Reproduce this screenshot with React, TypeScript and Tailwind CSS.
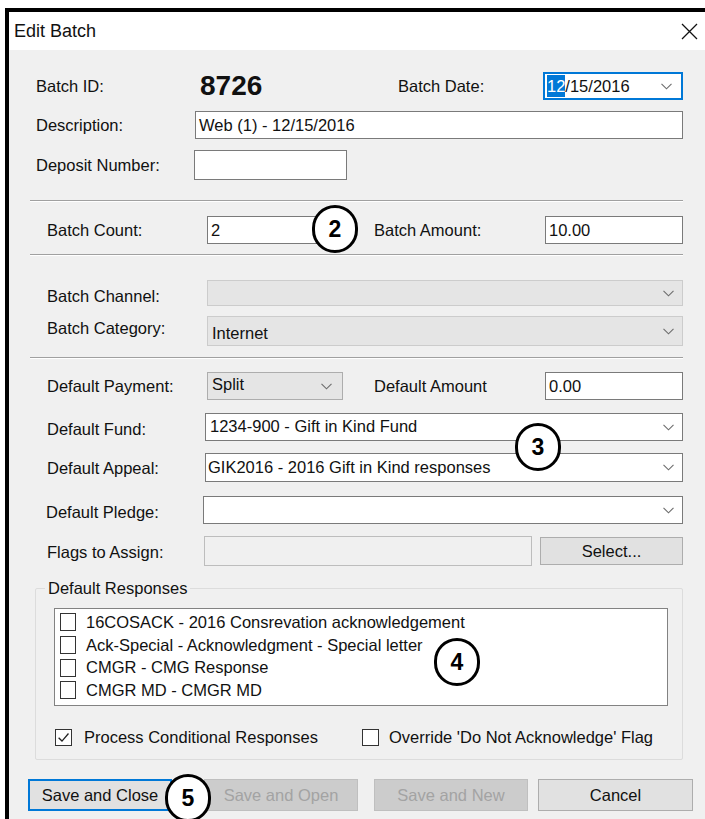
import React from 'react';

const font = "font-['Liberation_Sans',Arial,sans-serif]";

const Chevron: React.FC = () => (
  <svg width="11" height="7" viewBox="0 0 11 7" className="shrink-0">
    <path d="M0.5 0.8 L5.5 5.8 L10.5 0.8" fill="none" stroke="#6d6d6d" strokeWidth="1.1" />
  </svg>
);

const CheckBox: React.FC<{ checked?: boolean; className?: string }> = ({ checked, className }) => (
  <span className={`shrink-0 bg-white border border-[#333] flex items-center justify-center ${className ?? ''}`}>
    {checked && (
      <svg width="13" height="13" viewBox="0 0 12 12">
        <path d="M1.5 6.2 L4.6 9.3 L10.6 2.3" fill="none" stroke="#222" strokeWidth="1.2" />
      </svg>
    )}
  </span>
);

const Badge: React.FC<{ n: string; className: string }> = ({ n, className }) => (
  <div
    className={`absolute w-[46px] h-[48px] rounded-full border-[3px] border-black bg-white flex items-center justify-center text-[23px] font-bold text-black ${className}`}
  >
    {n}
  </div>
);

const Separator: React.FC<{ className: string }> = ({ className }) => (
  <div className={`ml-[21px] w-[653px] h-[2px] border-t border-[#a0a0a0] border-b border-b-white ${className}`} />
);

const responses = [
  '16COSACK - 2016 Consrevation acknowledgement',
  'Ack-Special - Acknowledgment - Special letter',
  'CMGR - CMG Response',
  'CMGR MD - CMGR MD',
];

export default function App() {
  return (
    <div className={`w-[705px] h-[819px] bg-white relative overflow-hidden text-[16.5px] text-[#111] ${font}`}>
      <div className="ml-[5px] mt-[8px] h-[811px] border-l-4 border-t-4 border-black flex flex-col">
        {/* title bar */}
        <div className="h-[38px] bg-white flex items-center justify-between pl-[5px] pr-[7px] shrink-0">
          <span className="text-[18px] leading-none">Edit Batch</span>
          <svg width="17" height="17" viewBox="0 0 17 17">
            <path d="M1 1 L16 16 M16 1 L1 16" stroke="#111" strokeWidth="1.3" />
          </svg>
        </div>

        <div className="flex-1 bg-[#f0f0f0] flex flex-col">
          {/* batch id / date */}
          <div className="mt-[22px] h-[28px] pl-[27px] flex items-center">
            <span className="w-[164px] shrink-0">Batch ID:</span>
            <span className="w-[198px] shrink-0 text-[28px] font-bold leading-none">8726</span>
            <span className="w-[145px] shrink-0">Batch Date:</span>
            <div className="w-[140px] h-[28px] bg-white border-2 border-[#0078d7] flex items-center pl-[2px] pr-[9px]">
              <span className="bg-[#0078d7] text-white leading-[22px]">12</span>
              <span className="flex-1">/15/2016</span>
              <Chevron />
            </div>
          </div>

          <div className="mt-[11px] h-[28px] pl-[27px] flex items-center">
            <span className="w-[159px] shrink-0">Description:</span>
            <div className="w-[488px] h-[28px] bg-white border border-[#7a7a7a] flex items-center pl-[3px]">
              Web (1) - 12/15/2016
            </div>
          </div>

          <div className="mt-[11px] h-[30px] pl-[27px] flex items-center">
            <span className="w-[158px] shrink-0">Deposit Number:</span>
            <div className="w-[153px] h-[30px] bg-white border border-[#7a7a7a]" />
          </div>

          <Separator className="mt-[20px]" />

          {/* counts */}
          <div className="mt-[14px] h-[28px] pl-[38px] flex items-center">
            <span className="w-[160px] shrink-0">Batch Count:</span>
            <div className="w-[115px] h-[28px] bg-white border border-[#7a7a7a] flex items-center pl-[3px] shrink-0">2</div>
            <span className="w-[52px] shrink-0" />
            <span className="w-[171px] shrink-0">Batch Amount:</span>
            <div className="w-[138px] h-[28px] bg-white border border-[#7a7a7a] flex items-center pl-[3px]">10.00</div>
          </div>

          <Separator className="mt-[10px]" />

          {/* channel / category */}
          <div className="mt-[24px] h-[26px] pl-[38px] flex items-center">
            <span className="w-[160px] shrink-0 pt-[6px]">Batch Channel:</span>
            <div className="w-[476px] h-[26px] bg-[#e5e5e5] border border-[#cccccc] flex items-center justify-end pr-[8px]">
              <Chevron />
            </div>
          </div>

          <div className="mt-[10px] h-[30px] pl-[38px] flex items-center">
            <span className="w-[160px] shrink-0 pb-[6px]">Batch Category:</span>
            <div className="w-[476px] h-[30px] bg-[#e5e5e5] border border-[#cccccc] flex items-center pl-[4px] pr-[8px]">
              <span className="flex-1 pt-[4px]">Internet</span>
              <Chevron />
            </div>
          </div>

          <Separator className="mt-[11px]" />

          {/* defaults */}
          <div className="mt-[13px] h-[28px] pl-[38px] flex items-center">
            <span className="w-[160px] shrink-0">Default Payment:</span>
            <div className="w-[136px] h-[28px] bg-[#e5e5e5] border border-[#adadad] flex items-center pl-[4px] pr-[10px] shrink-0">
              <span className="flex-1 pb-[4px]">Split</span>
              <Chevron />
            </div>
            <span className="w-[31px] shrink-0" />
            <span className="w-[171px] shrink-0">Default Amount</span>
            <div className="w-[138px] h-[28px] bg-white border border-[#7a7a7a] flex items-center pl-[3px]">0.00</div>
          </div>

          <div className="mt-[13px] h-[28px] pl-[38px] flex items-center">
            <span className="w-[158px] shrink-0 pt-[4px]">Default Fund:</span>
            <div className="w-[478px] h-[28px] bg-white border border-[#7a7a7a] flex items-center pl-[4px] pr-[8px]">
              <span className="flex-1 pb-[2px]">1234-900 - Gift in Kind Fund</span>
              <Chevron />
            </div>
          </div>

          <div className="mt-[12px] h-[29px] pl-[38px] flex items-center">
            <span className="w-[158px] shrink-0 pt-[2px]">Default Appeal:</span>
            <div className="w-[478px] h-[29px] bg-white border border-[#7a7a7a] flex items-center pl-[2px] pr-[8px]">
              <span className="flex-1">GIK2016 - 2016 Gift in Kind responses</span>
              <Chevron />
            </div>
          </div>

          <div className="mt-[14px] h-[28px] pl-[37px] flex items-center">
            <span className="w-[157px] shrink-0 pt-[4px]">Default Pledge:</span>
            <div className="w-[480px] h-[28px] bg-white border border-[#7a7a7a] flex items-center justify-end pr-[8px]">
              <Chevron />
            </div>
          </div>

          <div className="mt-[12px] h-[30px] pl-[38px] flex items-center">
            <span className="w-[157px] shrink-0 pt-[2px]">Flags to Assign:</span>
            <div className="w-[328px] h-[30px] bg-[#f0f0f0] border border-[#bdbdbd] shrink-0" />
            <button className="ml-[8px] w-[143px] h-[28px] bg-[#e1e1e1] border border-[#adadad] text-center">Select...</button>
          </div>

          {/* responses group */}
          <fieldset className="mt-[12px] ml-[26px] w-[648px] h-[182px] border border-[#dcdcdc] rounded-[2px] px-0">
            <legend className="ml-[9px] px-[3px] leading-[20px]">Default Responses</legend>
            <div className="mt-[10px] ml-[18px] w-[614px] h-[98px] bg-white border border-[#828282] pt-[2px] pl-[5px]">
              {responses.map((r) => (
                <div key={r} className="h-[22.7px] flex items-center">
                  <CheckBox className="w-[16px] h-[18px]" />
                  <span className="ml-[10px] leading-none">{r}</span>
                </div>
              ))}
            </div>
            <div className="mt-[19px] flex items-center">
              <CheckBox checked className="ml-[19px] w-[17px] h-[17px]" />
              <span className="ml-[12px] w-[278px] shrink-0">Process Conditional Responses</span>
              <CheckBox className="w-[17px] h-[17px]" />
              <span className="ml-[10px]">Override 'Do Not Acknowledge' Flag</span>
            </div>
          </fieldset>

          {/* buttons */}
          <div className="mt-[19px] pl-[19px] flex items-center">
            <button className="w-[144px] h-[32px] bg-[#e1e1e1] border-2 border-[#0078d7] text-center">Save and Close</button>
            <button className="ml-[32px] w-[154px] h-[32px] bg-[#cccccc] border border-[#bfbfbf] text-[#a3a3a3] text-center">Save and Open</button>
            <button className="ml-[16px] w-[154px] h-[32px] bg-[#cccccc] border border-[#bfbfbf] text-[#a3a3a3] text-center">Save and New</button>
            <button className="ml-[10px] w-[155px] h-[32px] bg-[#e1e1e1] border border-[#adadad] text-center">Cancel</button>
          </div>
        </div>
      </div>

      <Badge n="2" className="left-[312px] top-[205px]" />
      <Badge n="3" className="left-[515px] top-[423px]" />
      <Badge n="4" className="left-[434px] top-[638px]" />
      <Badge n="5" className="left-[165px] top-[774px]" />
    </div>
  );
}
